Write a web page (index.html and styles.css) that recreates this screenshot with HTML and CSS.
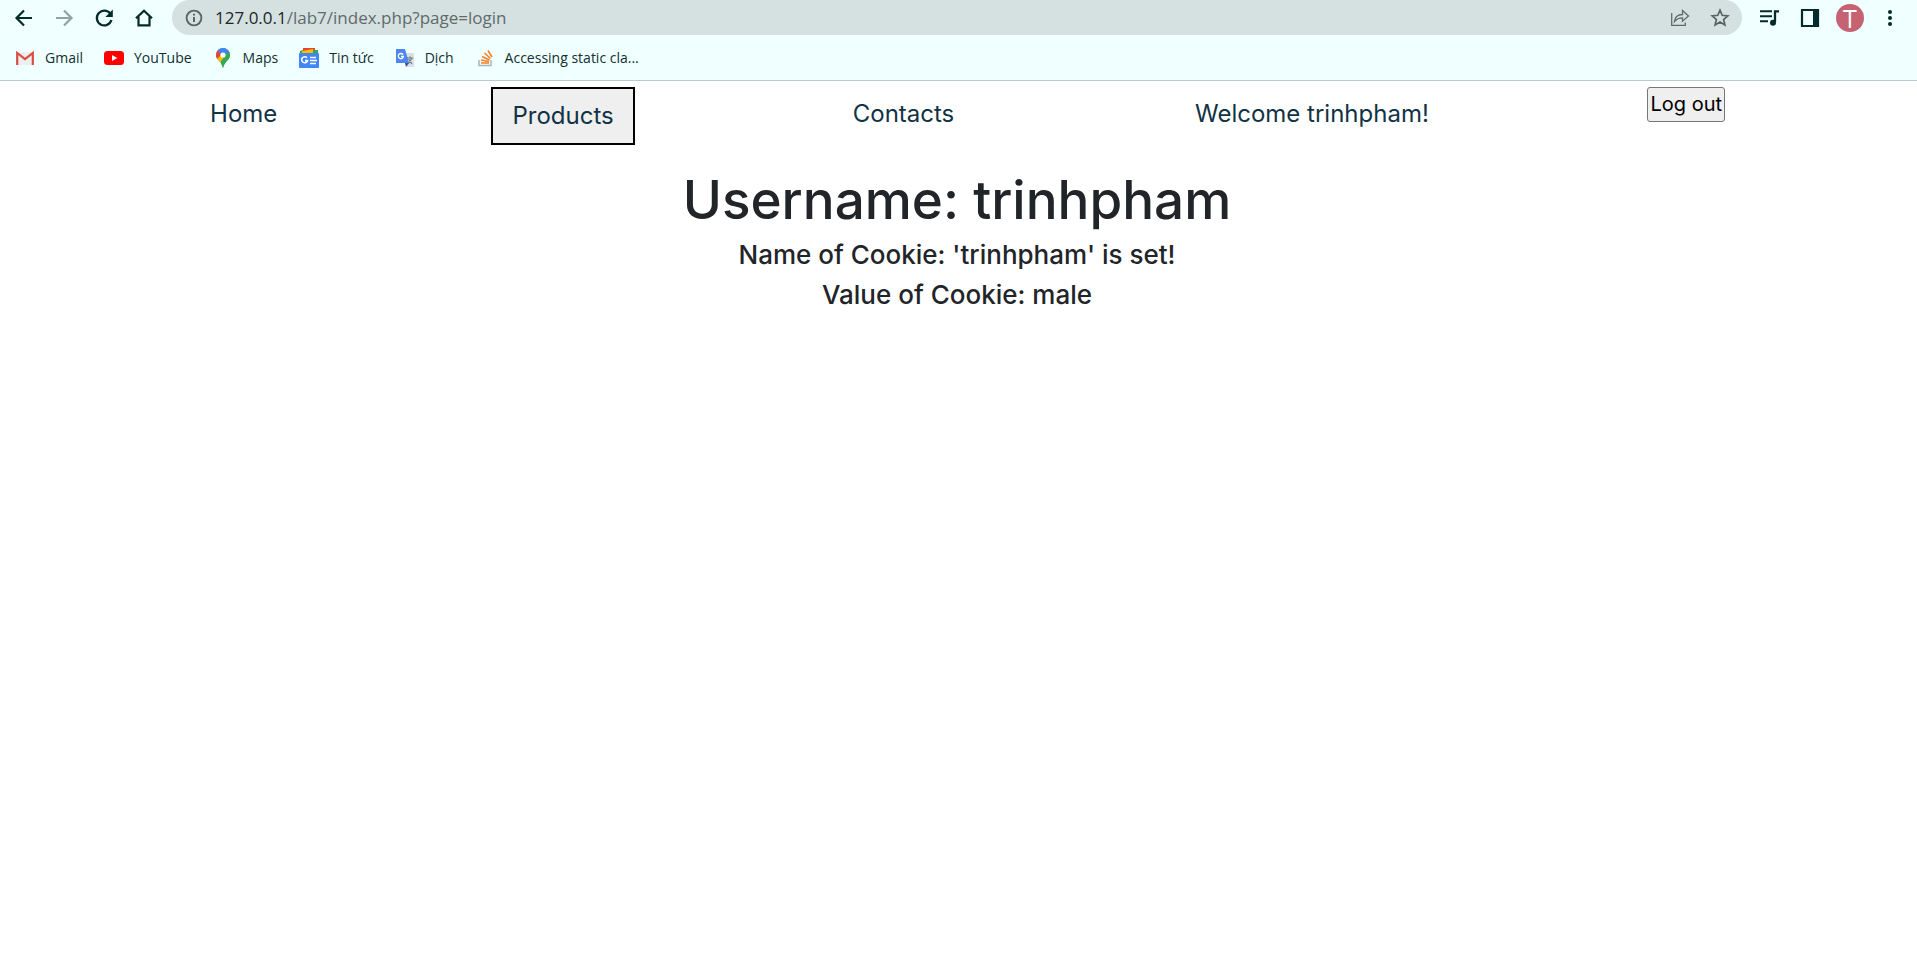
FILE: index.html
```html
<!DOCTYPE html>
<html lang="en">
<head>
<meta charset="utf-8">
<title>Login</title>
<link rel="stylesheet" href="styles.css">
</head>
<body>
<header class="browser">
  <div class="toolbar">
    <div class="nav-buttons">
      <button class="icon-button" aria-label="Back"><svg width="24" height="24" viewBox="0 0 24 24" fill="none" stroke="#052a2a" stroke-width="2.2"><path d="M20 12H5M12 4.500L4.500 12L12 19.500"/></svg></button>
      <button class="icon-button" aria-label="Forward"><svg width="24" height="24" viewBox="0 0 24 24" fill="none" stroke="#8fa3a3" stroke-width="2.200"><path d="M4 12H19M12 4.500L19.500 12L12 19.500"/></svg></button>
      <button class="icon-button" aria-label="Reload"><svg width="24" height="24" viewBox="0 0 24 24"><path d="M18.500 8A7.400 7.400 0 1 0 19.400 14" fill="none" stroke="#052a2a" stroke-width="2.300"/><path d="M20.800 3.500V11H13.300Z" fill="#052a2a"/></svg></button>
      <button class="icon-button" aria-label="Home"><svg width="24" height="24" viewBox="0 0 24 24" fill="none" stroke="#052a2a" stroke-width="2.200"><path d="M4 12.200L12 4.800L20 12.200M6.500 10.500V19.300H17.500V10.500"/></svg></button>
    </div>
    <div class="address">
      <svg width="18" height="18" viewBox="0 0 18 18"><circle cx="9" cy="9" r="7.400" fill="none" stroke="#5a6464" stroke-width="1.900"/><path d="M9 8V13M9 4.800V6.500" stroke="#5a6464" stroke-width="2"/></svg>
      <p class="url"><span class="url-host">127.0.0.1</span>/lab7/index.php?page=login</p>
      <button class="icon-button icon-small" aria-label="Share"><svg width="20" height="20" viewBox="0 0 20 20" fill="none" stroke="#5f6b6b" stroke-width="1.300"><path d="M1.700 5V17.300H15.300V14.500M4.500 13.500C5 9 8 6.500 12.500 6.500V2.500L18.500 8L12.500 13.200V9.800C8.500 9.800 6.500 11 4.500 13.500Z"/></svg></button>
      <button class="icon-button icon-small" aria-label="Bookmark this page"><svg width="20" height="20" viewBox="0 0 20 20" fill="none" stroke="#5a6464" stroke-width="1.700"><path d="M10 2.200L12.200 7.300L17.800 7.800L13.600 11.500L14.900 17L10 14.100L5.100 17L6.400 11.500L2.200 7.800L7.800 7.300Z"/></svg></button>
    </div>
    <div class="tools">
      <button class="icon-button" aria-label="Media controls"><svg width="24" height="24" viewBox="0 0 24 24"><path d="M2 5.300H14M2 10.300H14M2 15.300H10" stroke="#052a2a" stroke-width="2"/><path d="M17 16V5.300H21" fill="none" stroke="#052a2a" stroke-width="2.300"/><circle cx="15" cy="16.800" r="3" fill="#052a2a"/></svg></button>
      <button class="icon-button" aria-label="Side panel"><svg width="24" height="24" viewBox="0 0 24 24"><path d="M4 4H20V20H4Z" fill="none" stroke="#052a2a" stroke-width="2.200"/><path d="M15 4H20V20H15Z" fill="#052a2a"/></svg></button>
      <button class="avatar" aria-label="Profile">T</button>
      <button class="icon-button" aria-label="Menu"><svg width="24" height="24" viewBox="0 0 24 24" fill="#052a2a"><circle cx="12" cy="6" r="2"/><circle cx="12" cy="12" r="2"/><circle cx="12" cy="18" r="2"/></svg></button>
    </div>
  </div>
  <nav class="bookmarks" aria-label="Bookmarks">
    <a class="bookmark" href="#"><svg width="20" height="20" viewBox="0 0 20 20"><path d="M2 4H18V17H2Z" fill="#eceff0"/><path d="M2.200 17V5L10 11L17.800 5V17" fill="none" stroke="#dc4b40" stroke-width="2.200"/></svg>Gmail</a>
    <a class="bookmark" href="#"><svg width="20" height="20" viewBox="0 0 20 20"><rect y="3" width="20" height="14" rx="3.500" fill="#f00"/><path d="M8 7V13L13.300 10Z" fill="#fff"/></svg>YouTube</a>
    <a class="bookmark" href="#"><svg width="20" height="20" viewBox="0 0 20 20"><defs><clipPath id="pin"><path d="M10 0A7 7 0 0 0 3 7C3 12 8.500 13 10 20C11.500 13 17 12 17 7A7 7 0 0 0 10 0Z"/></clipPath></defs><g clip-path="url(#pin)"><path d="M0 0H20V20H0Z" fill="#34a853"/><path d="M0 15L13 0H20V3L6 16Z" fill="#fbbc04"/><path d="M0 0H6L10 5L3 12L0 10Z" fill="#ea4335"/><path d="M5 0H20V2L10 9L5 3Z" fill="#4285f4"/><path d="M16 3L20 7V20H8V13Z" fill="#34a853"/></g><circle cx="10" cy="7" r="2.600" fill="#fff"/></svg>Maps</a>
    <a class="bookmark" href="#"><svg width="20" height="20" viewBox="0 0 20 20"><path d="M1 3L4 2V6H1Z" fill="#34a853"/><path d="M4 0H16V6H4Z" fill="#ea4335"/><path d="M3 3L14 1L15 6H3Z" fill="#fbbc04"/><path d="M14 2H19V7H14Z" fill="#34a853"/><rect y="5" width="20" height="15" rx="1" fill="#4285f4"/><path d="M8 9.800A3 3 0 1 0 8.600 12.500H6M11 9.500H17M11 12.500H18M11 15.500H17" fill="none" stroke="#fff" stroke-width="1.600"/></svg>Tin tức</a>
    <a class="bookmark" href="#"><svg width="20" height="20" viewBox="0 0 20 20"><path d="M8 5H19V19H12Z" fill="#d9dfe2"/><path d="M1 1H10L14 15H1Z" fill="#4c86ee"/><path d="M10 15H14L11 19Z" fill="#3347b5"/><path d="M8 6.500A2.600 2.600 0 1 0 8.500 8.500H6" fill="none" stroke="#fff" stroke-width="1.300"/><path d="M12 10H18M15 8.500V10M17 10L13 16M13.500 11L17 16" fill="none" stroke="#687980" stroke-width="1.200"/></svg>Dịch</a>
    <a class="bookmark" href="#"><svg width="20" height="20" viewBox="0 0 20 20" fill="none"><path d="M4 12V17.500H16V12" stroke="#a9b5b8" stroke-width="1.500"/><path d="M6 15H14M6 12L14 13.500M7 8.500L14.500 12M9.500 5L15.500 10.500M13 2.500L17 9" stroke="#f48024" stroke-width="1.600"/></svg>Accessing static cla...</a>
  </nav>
</header>
<nav class="menu" aria-label="Main">
  <a class="menu-link menu-home" href="#">Home</a>
  <button class="menu-link menu-products">Products</button>
  <a class="menu-link menu-contacts" href="#">Contacts</a>
  <a class="menu-link menu-welcome" href="#">Welcome trinhpham!</a>
  <button class="logout">Log out</button>
</nav>
<main class="content">
  <h1 class="title">Username: trinhpham</h1>
  <h2 class="detail">Name of Cookie: 'trinhpham' is set!</h2>
  <h2 class="detail">Value of Cookie: male</h2>
</main>
</body>
</html>
```
FILE: styles.css
```css
* { box-sizing: border-box; }
body {
  margin: 0;
  background: #fff;
  color: #212529;
  font-family: Inter, "Liberation Sans", sans-serif;
}
button { font-family: inherit; }
svg { display: block; flex: none; }

.browser {
  background: #f0ffff;
  border-bottom: 1px solid #b4cccc;
  font-family: "Open Sans", "Noto Sans", sans-serif;
}
.toolbar { display: flex; height: 35px; padding: 0 15px 0 12px; }
.nav-buttons, .tools { display: flex; align-items: center; gap: 16px; }
.nav-buttons { margin-right: 16px; }
.tools { margin-left: 16px; }
.icon-button { display: grid; place-items: center; width: 24px; height: 24px; padding: 0; border: 0; background: none; }
.icon-small { width: 20px; }
.address {
  flex: 1;
  display: flex;
  align-items: center;
  gap: 20px;
  padding: 0 12px 0 13px;
  border-radius: 18px;
  background: #d5e0e0;
}
.url { flex: 1; margin: 0 0 0 -8px; color: #5f6b6b; font-size: 17px; line-height: 24px; }
.url-host { color: #1c2626; }
.avatar {
  width: 28px;
  height: 28px;
  margin: 0 -2px;
  padding: 0;
  border: 0;
  border-radius: 50%;
  background: #c56373;
  color: #fff;
  font-size: 25px;
  line-height: 28px;
}
.bookmarks { display: flex; align-items: center; gap: 21px; height: 45px; padding: 0 15px; }
.bookmark { display: flex; align-items: center; gap: 10px; color: #122f2f; font-size: 14px; line-height: 20px; text-decoration: none; white-space: nowrap; }

.menu { display: flex; align-items: flex-start; justify-content: space-between; padding: 6px 10% 0; }
.menu-link {
  padding: 10px 0;
  color: #113344;
  font-size: 24px;
  line-height: 34px;
  text-align: center;
  text-decoration: none;
  white-space: nowrap;
}
.menu-home { min-width: 104px; }
.menu-products { min-width: 144px; border: 2px solid #000; background: #efefef; }
.menu-contacts { min-width: 146px; }
.menu-welcome { min-width: 280px; }
.logout {
  min-width: 78px;
  padding: 1px;
  border: 1px solid #767676;
  border-radius: 3px;
  background: #efefef;
  color: #000;
  font-size: 20px;
  line-height: 31px;
}
.content { padding: 24px 3px 0 0; text-align: center; }
.title { margin: 0 0 8px; font-size: 53px; font-weight: 500; line-height: 62px; }
.detail { margin: 0 0 8px; font-size: 26px; font-weight: 500; line-height: 32px; }
```
